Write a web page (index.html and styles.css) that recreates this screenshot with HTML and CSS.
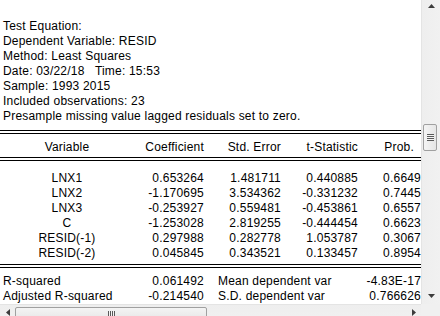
FILE: index.html
```html
<!DOCTYPE html>
<html lang="en">
<head>
    <meta charset="UTF-8">
    <meta name="viewport" content="width=device-width, initial-scale=1.0">
    <title>Equation Output</title>
    <link rel="stylesheet" href="styles.css">
</head>
<body>
    <div class="window">
        <div class="viewport">
            <div class="sheet">
                <div class="spec">
                    <p>Test Equation:</p>
                    <p>Dependent Variable: RESID</p>
                    <p>Method: Least Squares</p>
                    <p class="pre">Date: 03/22/18   Time: 15:53</p>
                    <p>Sample: 1993 2015</p>
                    <p>Included observations: 23</p>
                    <p>Presample missing value lagged residuals set to zero.</p>
                </div>

                <table class="results">
                    <colgroup>
                        <col class="col-var">
                        <col class="col-num">
                        <col class="col-num">
                        <col class="col-num">
                        <col class="col-prob">
                    </colgroup>
                    <thead>
                        <tr>
                            <th class="var">Variable</th>
                            <th>Coefficient</th>
                            <th>Std. Error</th>
                            <th>t-Statistic</th>
                            <th class="prob">Prob.</th>
                        </tr>
                    </thead>
                    <tbody class="coefs">
                        <tr><td class="var">LNX1</td><td>0.653264</td><td>1.481711</td><td>0.440885</td><td class="prob">0.6649</td></tr>
                        <tr><td class="var">LNX2</td><td>-1.170695</td><td>3.534362</td><td>-0.331232</td><td class="prob">0.7445</td></tr>
                        <tr><td class="var">LNX3</td><td>-0.253927</td><td>0.559481</td><td>-0.453861</td><td class="prob">0.6557</td></tr>
                        <tr><td class="var">C</td><td>-1.253028</td><td>2.819255</td><td>-0.444454</td><td class="prob">0.6623</td></tr>
                        <tr><td class="var">RESID(-1)</td><td>0.297988</td><td>0.282778</td><td>1.053787</td><td class="prob">0.3067</td></tr>
                        <tr><td class="var">RESID(-2)</td><td>0.045845</td><td>0.343521</td><td>0.133457</td><td class="prob">0.8954</td></tr>
                    </tbody>
                    <tbody class="stats">
                        <tr><td class="label">R-squared</td><td>0.061492</td><td class="label2" colspan="2">Mean dependent var</td><td class="prob">-4.83E-17</td></tr>
                        <tr><td class="label">Adjusted R-squared</td><td>-0.214540</td><td class="label2" colspan="2">S.D. dependent var</td><td class="prob">0.766626</td></tr>
                    </tbody>
                </table>
            </div>
        </div>

        <div class="vscroll">
            <div class="btn v-up">
                <svg width="7" height="4" viewBox="0 0 7 4"><polygon points="3.5,0 7,4 0,4" fill="#3c3c3c"/></svg>
            </div>
            <div class="v-track">
                <div class="thumb thumb-v">
                    <span class="grip"></span>
                </div>
            </div>
            <div class="btn v-down">
                <svg width="7" height="4" viewBox="0 0 7 4"><polygon points="0,0 7,0 3.5,4" fill="#3c3c3c"/></svg>
            </div>
        </div>

        <div class="hscroll">
            <div class="btn h-left">
                <svg width="4" height="7" viewBox="0 0 4 7"><polygon points="4,0 4,7 0,3.5" fill="#3c3c3c"/></svg>
            </div>
            <div class="h-track">
                <div class="thumb thumb-h">
                    <span class="grip"></span>
                </div>
            </div>
            <div class="btn h-right">
                <svg width="4" height="7" viewBox="0 0 4 7"><polygon points="0,0 4,3.5 0,7" fill="#3c3c3c"/></svg>
            </div>
        </div>

        <div class="corner"></div>
    </div>
</body>
</html>
```

FILE: styles.css
```css
* {
    margin: 0;
    padding: 0;
    box-sizing: border-box;
}

body {
    width: 440px;
    height: 316px;
    overflow: hidden;
    background: #ffffff;
    color: #000000;
    font-family: "Liberation Sans", Arial, sans-serif;
    font-size: 12px;
    line-height: 15px;
    letter-spacing: 0.2px;
}

.window {
    display: grid;
    grid-template-columns: 421px 19px;
    grid-template-rows: 304px 17px;
    width: 440px;
    height: 316px;
    overflow: hidden;
}

/* output area */
.viewport {
    overflow: hidden;
    background: #ffffff;
}

.sheet {
    width: 440px;
    padding-top: 19px;
}

.spec p {
    padding-left: 3px;
    white-space: nowrap;
}

.spec .pre {
    white-space: pre;
}

.results {
    width: 430px;
    margin-top: 6px;
    table-layout: fixed;
    border-collapse: separate;
    border-spacing: 0;
}

.col-var { width: 134px; }
.col-num:nth-child(2) { width: 74px; }
.col-num { width: 77px; }
.col-prob { width: 68px; }

.results th,
.results td {
    padding: 0 4px 0 0;
    font-weight: normal;
    text-align: right;
    white-space: nowrap;
    overflow: visible;
}

.results th {
    padding-top: 6px;
    padding-bottom: 2px;
    border-top: 4px double #000;
    border-bottom: 4px double #000;
}

.results .var {
    text-align: center;
    padding-right: 0;
}

.results .prob {
    padding-right: 9px;
}

.results th.prob {
    padding-right: 16px;
}

.coefs tr:first-child td {
    padding-top: 10px;
}

.coefs tr:last-child td {
    padding-bottom: 3px;
}

.stats tr:first-child td {
    border-top: 4px double #000;
    padding-top: 6px;
}

.stats .label {
    text-align: left;
    padding-left: 3px;
}

.stats .label2 {
    text-align: left;
    padding-left: 10px;
}

/* scrollbars */
.vscroll {
    display: flex;
    flex-direction: column;
    background: linear-gradient(to right, #e4e4e4 0, #e4e4e4 1px, #eeeeee 1px, #f1f1f1 100%);
}

.btn {
    display: flex;
    align-items: center;
    justify-content: center;
    flex: none;
}

.btn svg {
    display: block;
}

.v-up {
    height: 12px;
    padding-left: 1px;
}

.v-down {
    height: 17px;
    padding-left: 1px;
}

.v-track {
    flex: 1;
    padding-top: 112px;
    padding-left: 2px;
    padding-right: 3px;
}

.thumb {
    border: 1px solid #a0a0a0;
    border-radius: 2px;
    display: flex;
    align-items: center;
    justify-content: center;
}

.thumb-v {
    height: 27px;
    background: linear-gradient(to right, #f4f4f4, #e6e6e6);
}

.thumb-v .grip {
    width: 7px;
    height: 7px;
    background: repeating-linear-gradient(to bottom, #5a5a5a 0, #5a5a5a 1px, #f4f4f4 1px, #f4f4f4 2px);
}

.hscroll {
    display: flex;
    background: linear-gradient(to bottom, #e4e4e4 0, #e4e4e4 1px, #eeeeee 1px, #f1f1f1 100%);
}

.h-left,
.h-right {
    width: 15px;
    padding-bottom: 1px;
}

.h-track {
    flex: 1;
    padding-top: 3px;
}

.thumb-h {
    width: 192px;
    height: 14px;
    background: linear-gradient(to bottom, #f4f4f4, #e6e6e6);
}

.thumb-h .grip {
    width: 7px;
    height: 7px;
    background: repeating-linear-gradient(to right, #5a5a5a 0, #5a5a5a 1px, #f4f4f4 1px, #f4f4f4 2px);
}

.corner {
    background: #f0f0f0;
}
```
